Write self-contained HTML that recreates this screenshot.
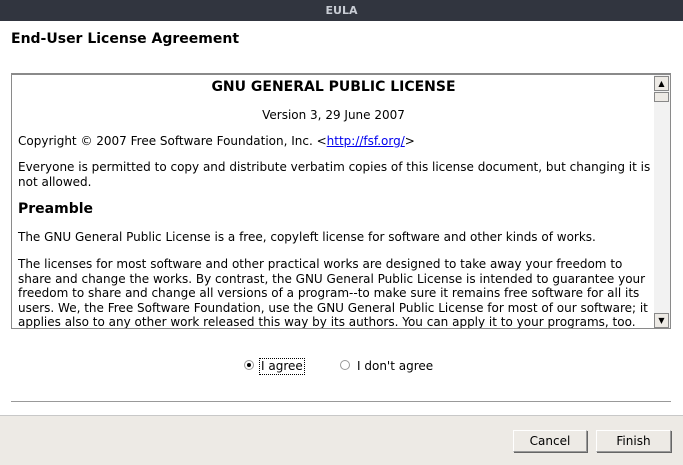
<!DOCTYPE html>
<html><head><style>
*{margin:0;padding:0;box-sizing:border-box}
body{width:683px;height:465px;background:#fff;font-family:"DejaVu Sans","Liberation Sans",sans-serif;font-size:12px;color:#000;position:relative;overflow:hidden}
.tb{position:absolute;left:0;top:0;width:683px;height:21px;background:#31353f;color:#c8ccd4;font-size:11px;font-weight:bold;text-align:center;line-height:21px}
.h{position:absolute;left:11px;top:31px;font-size:14px;font-weight:bold}
.box{position:absolute;left:11px;top:73px;width:660px;height:256px;border:1px solid #8a8a8a;border-top:2px solid #8a8a8a;overflow:hidden}
.t{position:absolute;left:6px;white-space:nowrap;line-height:14.5px}
.sb{position:absolute;left:642px;top:0;width:16px;height:254px;background:#f2f2f2}
.btn{position:absolute;width:15px;height:15px;background:#edeae5;border:1px solid #888;font-size:8px;text-align:center;line-height:13px}
.bot{position:absolute;left:0;top:415px;width:683px;height:50px;background:#edeae5;border-top:1px solid #c8c8c8}
.pb{position:absolute;top:14px;height:22px;background:#edeae5;border:1px solid #999;border-top-color:#fff;border-left-color:#fff;box-shadow:1px 1px 0 #666;text-align:center;line-height:20px;font-size:12px}
.r{position:absolute;top:360px;width:10px;height:10px;border-radius:50%;border:1px solid #999;background:#fff}
</style></head><body>
<div class="tb">EULA</div>
<div class="h">End-User License Agreement</div>
<div class="box">
<div class="t" style="left:0;width:643px;text-align:center;top:5px;font-size:14px;font-weight:bold">GNU GENERAL PUBLIC LICENSE</div>
<div class="t" style="left:0;width:643px;text-align:center;top:33px">Version 3, 29 June 2007</div>
<div class="t" style="top:59px">Copyright © 2007 Free Software Foundation, Inc. &lt;<span style="color:#00e;text-decoration:underline">http://fsf.org/</span>&gt;</div>
<div class="t" style="top:85px">Everyone is permitted to copy and distribute verbatim copies of this license document, but changing it is<br>not allowed.</div>
<div class="t" style="top:127px;font-size:14px;font-weight:bold">Preamble</div>
<div class="t" style="top:155px">The GNU General Public License is a free, copyleft license for software and other kinds of works.</div>
<div class="t" style="top:182px">The licenses for most software and other practical works are designed to take away your freedom to<br>share and change the works. By contrast, the GNU General Public License is intended to guarantee your<br>freedom to share and change all versions of a program--to make sure it remains free software for all its<br>users. We, the Free Software Foundation, use the GNU General Public License for most of our software; it<br>applies also to any other work released this way by its authors. You can apply it to your programs, too.</div>
<div class="sb">
<div class="btn" style="top:1px;left:0">▲</div>
<div class="btn" style="top:17px;left:0;height:10px"></div>
<div class="btn" style="top:238px;left:0">▼</div>
</div>
</div>
<div class="r" style="left:244px;"><div style="position:absolute;left:2px;top:2px;width:4px;height:4px;border-radius:50%;background:#000"></div></div>
<div style="position:absolute;left:259px;top:358px;border:1px dotted #000;padding:0 1px;line-height:15px">I agree</div>
<div class="r" style="left:340px"></div>
<div style="position:absolute;left:357px;top:359px;line-height:15px">I don't agree</div>
<div style="position:absolute;left:11px;top:401px;width:660px;height:1px;background:#999"></div>
<div class="bot">
<div class="pb" style="left:513px;width:74px">Cancel</div>
<div class="pb" style="left:596px;width:75px">Finish</div>
</div>
</body></html>
